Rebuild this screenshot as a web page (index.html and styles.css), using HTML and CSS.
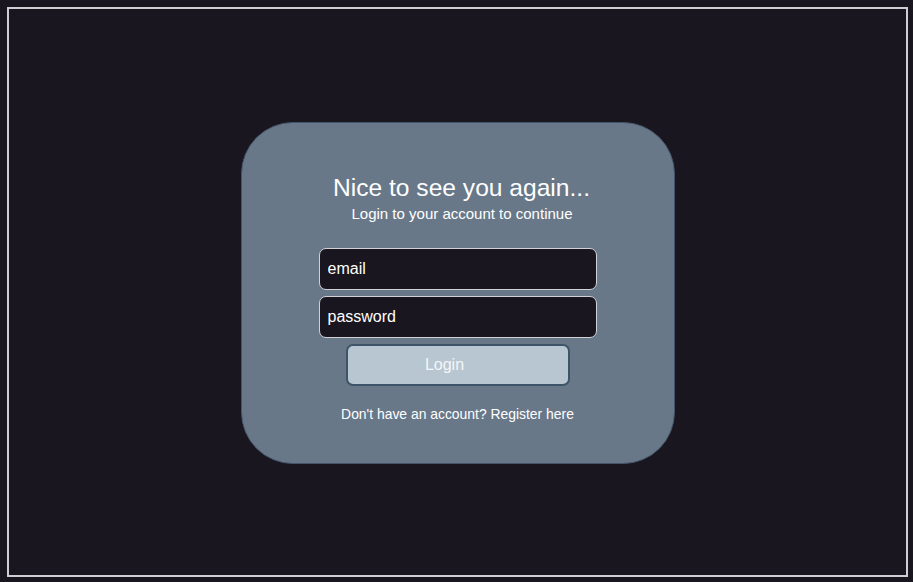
FILE: index.html
```html
<!DOCTYPE html>
<html lang="en">
<head>
<meta charset="utf-8">
<title>Login</title>
<link rel="stylesheet" href="styles.css">
</head>
<body>
<div class="frame">
  <form class="card">
    <h1 class="title">Nice to see you again...</h1>
    <p class="subtitle">Login to your account to continue</p>
    <div class="fields">
      <input class="field" type="text" placeholder="email">
      <input class="field" type="password" placeholder="password">
      <button class="btn" type="button">Login</button>
    </div>
    <p class="register">Don't have an account? Register here</p>
  </form>
</div>
</body>
</html>
```
FILE: styles.css
```css
html, body {
  margin: 0;
  padding: 0;
  background: #19161f;
  font-family: "Liberation Sans", Arial, sans-serif;
}
body {
  padding: 7px 5px 5px 7px;
}
.frame {
  box-sizing: border-box;
  width: 901px;
  height: 570px;
  border: 2px solid #cfcfd2;
  padding-top: 2px;
  display: flex;
  align-items: center;
  justify-content: center;
}
.card {
  box-sizing: border-box;
  width: 434px;
  height: 342px;
  background: #687889;
  border: 1px solid #44546a;
  border-radius: 52px;
  padding-top: 51px;
  display: flex;
  flex-direction: column;
  align-items: center;
  color: #ffffff;
}
.title {
  margin: 0;
  padding-left: 8px;
  font-size: 24.6px;
  line-height: 28px;
  font-weight: normal;
}
.subtitle {
  margin: 4px 0 0;
  padding-left: 9px;
  font-size: 15px;
  line-height: 16px;
}
.fields {
  margin-top: 26px;
  display: flex;
  flex-direction: column;
  align-items: center;
  gap: 6px;
}
.field {
  box-sizing: border-box;
  width: 278px;
  height: 42px;
  background: #19161f;
  border: 1px solid #d2d2d6;
  border-radius: 7px;
  padding: 0 8px;
  font-family: "Liberation Sans", Arial, sans-serif;
  font-size: 16px;
  color: #ffffff;
  outline: none;
}
.field::placeholder {
  color: #ffffff;
  opacity: 1;
}
.btn {
  box-sizing: border-box;
  width: 224px;
  height: 42px;
  background: #b8c6d1;
  border: 2px solid #3e5468;
  border-radius: 7px;
  padding: 0 26px 0 0;
  font-family: "Liberation Sans", Arial, sans-serif;
  font-size: 16px;
  color: #f4f6f8;
}
.register {
  margin: 20px 0 0;
  font-size: 13.9px;
  line-height: 16px;
}
```
